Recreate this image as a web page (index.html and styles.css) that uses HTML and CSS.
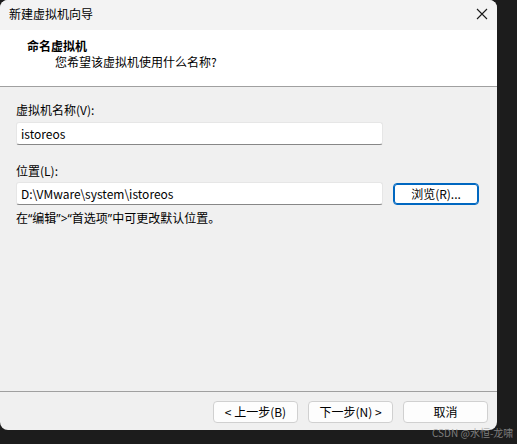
FILE: index.html
```html
<!DOCTYPE html>
<html lang="zh-CN">
<head>
<meta charset="utf-8">
<title>新建虚拟机向导</title>
<link rel="stylesheet" href="styles.css">
</head>
<body>
<div class="window">
  <div class="titlebar">
    <span class="title">新建虚拟机向导</span>
    <svg class="close" width="12" height="12" viewBox="0 0 12 12"><path d="M1 1 L11 11 M11 1 L1 11" stroke="#1a1a1a" stroke-width="1.1" fill="none"/></svg>
  </div>
  <div class="header">
    <div class="h-title">命名虚拟机</div>
    <div class="h-sub">您希望该虚拟机使用什么名称?</div>
  </div>
  <div class="content">
    <div class="label label-first">虚拟机名称(V):</div>
    <div class="input">istoreos</div>
    <div class="label label-second">位置(L):</div>
    <div class="row">
      <div class="input">D:\VMware\system\istoreos</div>
      <button class="btn btn-focus">浏览(R)...</button>
    </div>
    <div class="hint">在<span class="q">“</span>编辑<span class="q">”&gt;“</span>首选项<span class="q">”</span>中可更改默认位置。</div>
  </div>
  <div class="footer">
    <button class="btn">&lt; 上一步(B)</button>
    <button class="btn">下一步(N) &gt;</button>
    <button class="btn">取消</button>
  </div>
</div>
<div class="watermark">CSDN @水恒-龙啸</div>
</body>
</html>
```
FILE: styles.css
```css
html, body {
  margin: 0;
  padding: 0;
  background: #1c1c1c;
  width: 517px;
  height: 444px;
  overflow: hidden;
  font-family: "Noto Sans CJK SC", "Noto Sans", sans-serif;
  font-size: 12px;
  color: #000;
}
.window {
  width: 497px;
  height: 430px;
  background: #f0f0f0;
  border-radius: 8px;
  overflow: hidden;
  display: flex;
  flex-direction: column;
}
.titlebar {
  height: 30px;
  background: #f3f3f3;
  display: flex;
  align-items: center;
  justify-content: space-between;
  padding: 0 9px 2px 9px;
  box-sizing: border-box;
}
.title {
  line-height: 16px;
}
.header {
  height: 57px;
  box-sizing: border-box;
  background: #fff;
  border-bottom: 1px solid #a0a0a0;
  padding-top: 8px;
}
.h-title {
  font-weight: bold;
  line-height: 16px;
  padding-left: 27px;
}
.h-sub {
  line-height: 16px;
  padding-left: 55px;
}
.content {
  flex: 1;
  padding-left: 16px;
  display: flex;
  flex-direction: column;
  align-items: flex-start;
}
.label {
  line-height: 16px;
}
.label-first {
  margin-top: 15px;
  margin-bottom: 4px;
}
.label-second {
  margin-top: 18px;
  margin-bottom: 3px;
}
.input {
  width: 367px;
  height: 23px;
  box-sizing: border-box;
  background: #fff;
  border: 1px solid #e6e6e6;
  border-bottom: 1px solid #878787;
  border-radius: 3px;
  padding-left: 4px;
  line-height: 21px;
}
.row {
  display: flex;
  align-items: center;
}
.btn {
  font-family: inherit;
  font-size: 12px;
  width: 85px;
  height: 22px;
  box-sizing: border-box;
  background: #fdfdfd;
  border: 1px solid #d0d0d0;
  border-radius: 4px;
  padding: 0;
  line-height: 18px;
  color: #000;
}
.btn-focus {
  width: 86px;
  margin-left: 10px;
  border: 1px solid #0067c0;
  box-shadow: inset 0 0 0 1px #0067c0;
  background: #fff;
}
.hint {
  margin-top: 5px;
  line-height: 16px;
}
.q {
  font-family: "Noto Sans", sans-serif;
}
.footer {
  border-top: 1px solid #a0a0a0;
  padding: 9px 9px 7px 0;
  display: flex;
  justify-content: flex-end;
  gap: 10px;
}
.watermark {
  position: absolute;
  left: 432px;
  top: 426px;
  font-family: "Noto Sans CJK SC", sans-serif;
  font-size: 10px;
  line-height: 13px;
  color: rgba(160, 160, 160, 0.75);
  white-space: nowrap;
}
```
